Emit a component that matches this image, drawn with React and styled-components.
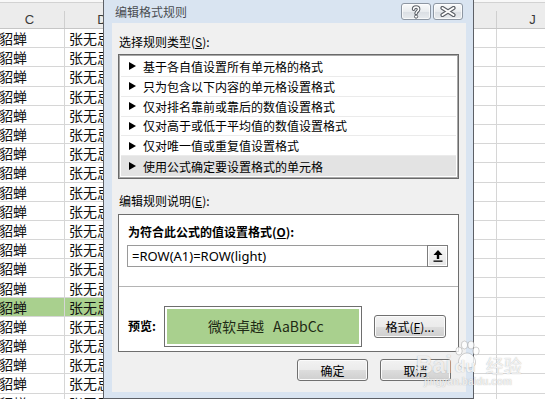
import React from "react";
import styled, { createGlobalStyle } from "styled-components";

const GlobalStyle = createGlobalStyle`
  html, body {
    margin: 0;
    padding: 0;
  }
  body {
    width: 545px;
    height: 399px;
    overflow: hidden;
    background: #fff;
    font-family: "Noto Sans CJK SC", "Noto Sans", sans-serif;
  }
`;

// columns E..I sit behind the dialog, so they carry no visible label
const COLS = [
  { name: "C", width: 70, text: "貂蝉", shown: true },
  { name: "D", width: 75, text: "张无忌", shown: true },
  { name: "E", width: 72 },
  { name: "F", width: 72 },
  { name: "G", width: 72 },
  { name: "H", width: 72 },
  { name: "I", width: 69 },
  { name: "J", width: 72, shown: true },
];
const ROW_COUNT = 20;
const HIGHLIGHT_ROW = 14;

const RULE_TYPES = [
  "基于各自值设置所有单元格的格式",
  "只为包含以下内容的单元格设置格式",
  "仅对排名靠前或靠后的数值设置格式",
  "仅对高于或低于平均值的数值设置格式",
  "仅对唯一值或重复值设置格式",
  "使用公式确定要设置格式的单元格",
];

function HelpGlyph() {
  const d = "M2.6 4.2 C2.6 1.2 7.6 1.2 7.6 4.2 C7.6 6.4 5.1 6.2 5.1 8.6";
  return (
    <svg width="10" height="14" viewBox="0 0 10 14">
      <path d={d} fill="none" stroke="#5b5f66" strokeWidth="3.6" strokeLinecap="round" />
      <path d={d} fill="none" stroke="#fff" strokeWidth="1.5" strokeLinecap="round" />
      <circle cx="5.1" cy="11.6" r="1.6" fill="#fff" stroke="#5b5f66" strokeWidth="1" />
    </svg>
  );
}

function CloseGlyph() {
  return (
    <svg width="18" height="11" viewBox="0 0 18 11">
      <path d="M3.5 2 L14.5 9 M14.5 2 L3.5 9" stroke="#5b5f66" strokeWidth="4.2" strokeLinecap="round" />
      <path d="M3.5 2 L14.5 9 M14.5 2 L3.5 9" stroke="#fff" strokeWidth="2" strokeLinecap="round" />
    </svg>
  );
}

function CollapseGlyph() {
  return (
    <svg width="12" height="14" viewBox="0 0 12 14">
      <polygon points="6,1 10.5,6 1.5,6" fill="#000" />
      <rect x="4.8" y="5.5" width="2.4" height="4.5" fill="#000" />
      <rect x="1.5" y="11.5" width="9" height="1.3" fill="#000" />
    </svg>
  );
}

function Paw() {
  return (
    <svg width="30" height="30" viewBox="0 0 30 30">
      <g fill="rgba(255,255,255,0.8)" stroke="rgba(130,130,130,0.45)" strokeWidth="0.8">
        <ellipse cx="7" cy="11" rx="3.2" ry="4" />
        <ellipse cx="12.5" cy="5" rx="3.2" ry="4" />
        <ellipse cx="19" cy="5" rx="3.2" ry="4" />
        <ellipse cx="24" cy="11" rx="3.2" ry="4" />
        <path d="M15 13 C9 13 5 20 7 25 C9 29 21 29 23 25 C25 20 21 13 15 13 Z" />
      </g>
    </svg>
  );
}

export default function App() {
  return (
    <>
      <GlobalStyle />
      <Screen>
        <Sheet>
          <TopStrip />
          <HeaderBand>
            {COLS.map((c) => (
              <ColHead key={c.name} $w={c.width}>
                {c.shown ? c.name : null}
              </ColHead>
            ))}
          </HeaderBand>
          {Array.from({ length: ROW_COUNT }).map((_, r) => (
            <Row key={r}>
              {COLS.map((c) => (
                <Cell
                  key={c.name}
                  $w={c.width}
                  $hl={r === HIGHLIGHT_ROW && !!c.text}
                >
                  {c.text}
                </Cell>
              ))}
            </Row>
          ))}
        </Sheet>

        <Dialog>
          <TitleBar>
            <Title>编辑格式规则</Title>
            <CaptionButtons>
              <CaptionButton>
                <HelpGlyph />
              </CaptionButton>
              <CaptionButton>
                <CloseGlyph />
              </CaptionButton>
            </CaptionButtons>
          </TitleBar>

          <Body>
            <Label>
              选择规则类型(<u>S</u>):
            </Label>
            <RuleList>
              {RULE_TYPES.map((t, i) => (
                <RuleItem key={t} $selected={i === RULE_TYPES.length - 1}>
                  <Arrow />
                  {t}
                </RuleItem>
              ))}
            </RuleList>

            <Label $gap={14}>
              编辑规则说明(<u>E</u>):
            </Label>
            <DescBox>
              <FormulaSection>
                <BoldLabel>
                  为符合此公式的值设置格式(<u>O</u>):
                </BoldLabel>
                <FormulaRow>
                  <FormulaInput>=ROW(A1)=ROW(light)</FormulaInput>
                  <CollapseButton>
                    <CollapseGlyph />
                  </CollapseButton>
                </FormulaRow>
              </FormulaSection>
              <PreviewSection>
                <BoldLabel>预览:</BoldLabel>
                <PreviewFrame>
                  <PreviewFill>
                    <span>微软卓越</span>
                    <span>AaBbCc</span>
                  </PreviewFill>
                </PreviewFrame>
                <PushButton $w={72} $h={23}>
                  格式(<u>F</u>)...
                </PushButton>
              </PreviewSection>
            </DescBox>

            <Footer>
              <PushButton $w={71} $h={22}>确定</PushButton>
              <PushButton $w={71} $h={22}>取消</PushButton>
            </Footer>
          </Body>
        </Dialog>

        <Watermark>
          <WmTop>
            <WmLogo>Bai</WmLogo>
            <WmPaw>
              <Paw />
              <WmDu>du</WmDu>
            </WmPaw>
            <WmWord>经验</WmWord>
          </WmTop>
          <WmUrl>jingyan.baidu.com</WmUrl>
        </Watermark>
      </Screen>
    </>
  );
}

const Screen = styled.div`
  position: relative;
  width: 545px;
  height: 399px;
  overflow: hidden;
  background: #fff;
`;

const Sheet = styled.div`
  margin-left: -5px;
  width: 574px;
`;

const TopStrip = styled.div`
  height: 2px;
  background: #f8f8f8;
  border-bottom: 1px solid #d2d2d2;
`;

const HeaderBand = styled.div`
  display: flex;
  align-items: flex-end;
  height: 25px;
  background: #ececec;
  border-bottom: 1px solid #c6c6c6;
`;

const ColHead = styled.div`
  width: ${(p) => p.$w}px;
  height: 17px;
  box-sizing: border-box;
  border-right: 1px solid #cfcfcf;
  display: flex;
  align-items: center;
  justify-content: center;
  font-family: "Liberation Sans", Arial, sans-serif;
  font-size: 13px;
  color: #3a3a3a;
`;

const Row = styled.div`
  display: flex;
  height: 19.2px;
`;

const Cell = styled.div`
  width: ${(p) => p.$w}px;
  height: 100%;
  box-sizing: border-box;
  border-right: 1px solid #d6d6d6;
  border-bottom: 1px solid #d6d6d6;
  background: ${(p) => (p.$hl ? "#a9d08e" : "#fff")};
  padding: 1px 0 0 4px;
  display: flex;
  align-items: center;
  font-size: 14px;
  line-height: 17px;
  color: #111;
  white-space: nowrap;
  overflow: hidden;
`;

const Dialog = styled.div`
  position: absolute;
  left: 103px;
  top: -1px;
  width: 371px;
  height: 400px;
  box-sizing: border-box;
  border: 1px solid #5d6066;
  background: #d9e4f1;
  padding: 0 7px 6px 8px;
  display: flex;
  flex-direction: column;
`;

const TitleBar = styled.div`
  height: 23px;
  display: flex;
  align-items: center;
  padding: 0 3px;
  box-sizing: border-box;
`;

const Title = styled.div`
  font-size: 12px;
  line-height: 14px;
  color: #4a4d52;
`;

const CaptionButtons = styled.div`
  margin-left: auto;
  align-self: flex-start;
  margin-top: 3px;
  display: flex;
  gap: 2px;
`;

const CaptionButton = styled.div`
  width: 30px;
  height: 17px;
  box-sizing: border-box;
  border: 1px solid #8d96a2;
  border-radius: 3px;
  background: linear-gradient(#f9fafb, #e9ecef 50%, #dadee3 51%, #e8ebee);
  box-shadow: inset 0 0 0 1px rgba(255, 255, 255, 0.7);
  display: flex;
  align-items: center;
  justify-content: center;
`;

const Body = styled.div`
  flex: 1;
  background: #f0f0f0;
  padding: 11px 7px 0 6px;
  display: flex;
  flex-direction: column;
  font-size: 12px;
  color: #000;
`;

const Label = styled.div`
  margin-top: ${(p) => p.$gap || 0}px;
  padding-left: 1px;
  line-height: 16px;
  height: 16px;
`;

const RuleList = styled.div`
  margin-top: 4px;
  height: 125px;
  box-sizing: border-box;
  border: 1px solid #6a6a6a;
  box-shadow: inset 0 0 0 1px #a8a8a8;
  background: #fff;
  padding: 2px 2px;
  display: flex;
  flex-direction: column;
`;

const RuleItem = styled.div`
  height: 20.2px;
  box-sizing: border-box;
  display: flex;
  align-items: center;
  padding-left: 8px;
  border-bottom: ${(p) => (p.$selected ? "none" : "1px solid #ebebeb")};
  background: ${(p) => (p.$selected ? "#e3e3e3" : "transparent")};
  white-space: nowrap;
`;

const Arrow = styled.span`
  width: 0;
  height: 0;
  border-left: 7px solid #000;
  border-top: 4px solid transparent;
  border-bottom: 4px solid transparent;
  margin-right: 7px;
`;

const DescBox = styled.div`
  margin-top: 5px;
  height: 138px;
  box-sizing: border-box;
  border: 1px solid #6e6e6e;
  background: #fff;
  display: flex;
  flex-direction: column;
`;

const FormulaSection = styled.div`
  height: 72px;
  box-sizing: border-box;
  border-bottom: 1px solid #b4b4b4;
  padding: 9px 10px 0 8px;
`;

const BoldLabel = styled.div`
  font-weight: bold;
  line-height: 16px;
  padding-left: 1px;
  white-space: nowrap;
`;

const FormulaRow = styled.div`
  margin-top: 5px;
  display: flex;
  height: 22px;
`;

const FormulaInput = styled.div`
  flex: 1;
  box-sizing: border-box;
  border: 1px solid #9a9a9a;
  border-right: none;
  padding-left: 4px;
  display: flex;
  align-items: center;
  font-family: "Noto Sans", sans-serif;
  font-size: 13px;
  color: #000;
`;

const CollapseButton = styled.div`
  width: 21px;
  box-sizing: border-box;
  border: 1px solid #7d7d7d;
  box-shadow: inset 0 0 0 1px #fff;
  background: linear-gradient(#f7f7f7, #e6e6e6);
  display: flex;
  align-items: center;
  justify-content: center;
`;

const PreviewSection = styled.div`
  flex: 1;
  display: flex;
  align-items: center;
  padding: 14px 11px 0 8px;
  box-sizing: border-box;
`;

const PreviewFrame = styled.div`
  margin-left: 8px;
  width: 198px;
  height: 41px;
  box-sizing: border-box;
  border: 1px solid #6e6e6e;
  padding: 2px;
  background: #fff;
  margin-right: 12px;
`;

const PreviewFill = styled.div`
  height: 100%;
  background: #a9d08e;
  display: flex;
  align-items: center;
  justify-content: center;
  gap: 9px;
  font-size: 14px;
  color: #1e2a14;
  span:first-child {
    margin-left: 6px;
  }
`;

const PushButton = styled.div`
  width: ${(p) => p.$w}px;
  height: ${(p) => p.$h}px;
  box-sizing: border-box;
  border: 1px solid #707070;
  border-radius: 3px;
  background: linear-gradient(#f2f2f2 0%, #ebebeb 50%, #dddddd 51%, #cfcfcf 100%);
  box-shadow: inset 0 0 0 1px #fbfbfb;
  display: flex;
  align-items: center;
  justify-content: center;
  font-size: 12px;
  color: #000;
  white-space: nowrap;
`;

const Footer = styled.div`
  margin-top: 7px;
  display: flex;
  justify-content: flex-end;
  gap: 12px;
  padding-right: 8px;
`;

const Watermark = styled.div`
  position: absolute;
  left: 416px;
  top: 338px;
  display: flex;
  flex-direction: column;
  align-items: flex-start;
  pointer-events: none;
`;

const WmTop = styled.div`
  display: flex;
  align-items: flex-end;
  height: 40px;
`;

const WmLogo = styled.span`
  font-family: "Liberation Sans", Arial, sans-serif;
  font-weight: bold;
  font-size: 23px;
  line-height: 26px;
  color: rgba(255, 255, 255, 0.8);
  text-shadow: 0 0 1px rgba(110, 110, 110, 0.55);
`;

const WmPaw = styled.span`
  position: relative;
  width: 30px;
  height: 38px;
  display: flex;
  align-items: flex-end;
  svg {
    position: absolute;
    left: 0;
    top: 0;
  }
`;

const WmDu = styled.span`
  position: relative;
  font-family: "Liberation Sans", Arial, sans-serif;
  font-weight: bold;
  font-size: 17px;
  line-height: 22px;
  padding-left: 3px;
  color: rgba(255, 255, 255, 0.85);
  text-shadow: 0 0 1px rgba(110, 110, 110, 0.55);
`;

const WmWord = styled.span`
  margin-left: 4px;
  font-size: 18px;
  line-height: 26px;
  color: rgba(255, 255, 255, 0.8);
  text-shadow: 0 0 1px rgba(110, 110, 110, 0.55);
`;

const WmUrl = styled.span`
  margin-left: 8px;
  margin-top: -2px;
  font-family: "Liberation Sans", Arial, sans-serif;
  font-size: 10px;
  font-weight: bold;
  color: rgba(255, 255, 255, 0.75);
  text-shadow: 0 0 1px rgba(110, 110, 110, 0.5);
`;
